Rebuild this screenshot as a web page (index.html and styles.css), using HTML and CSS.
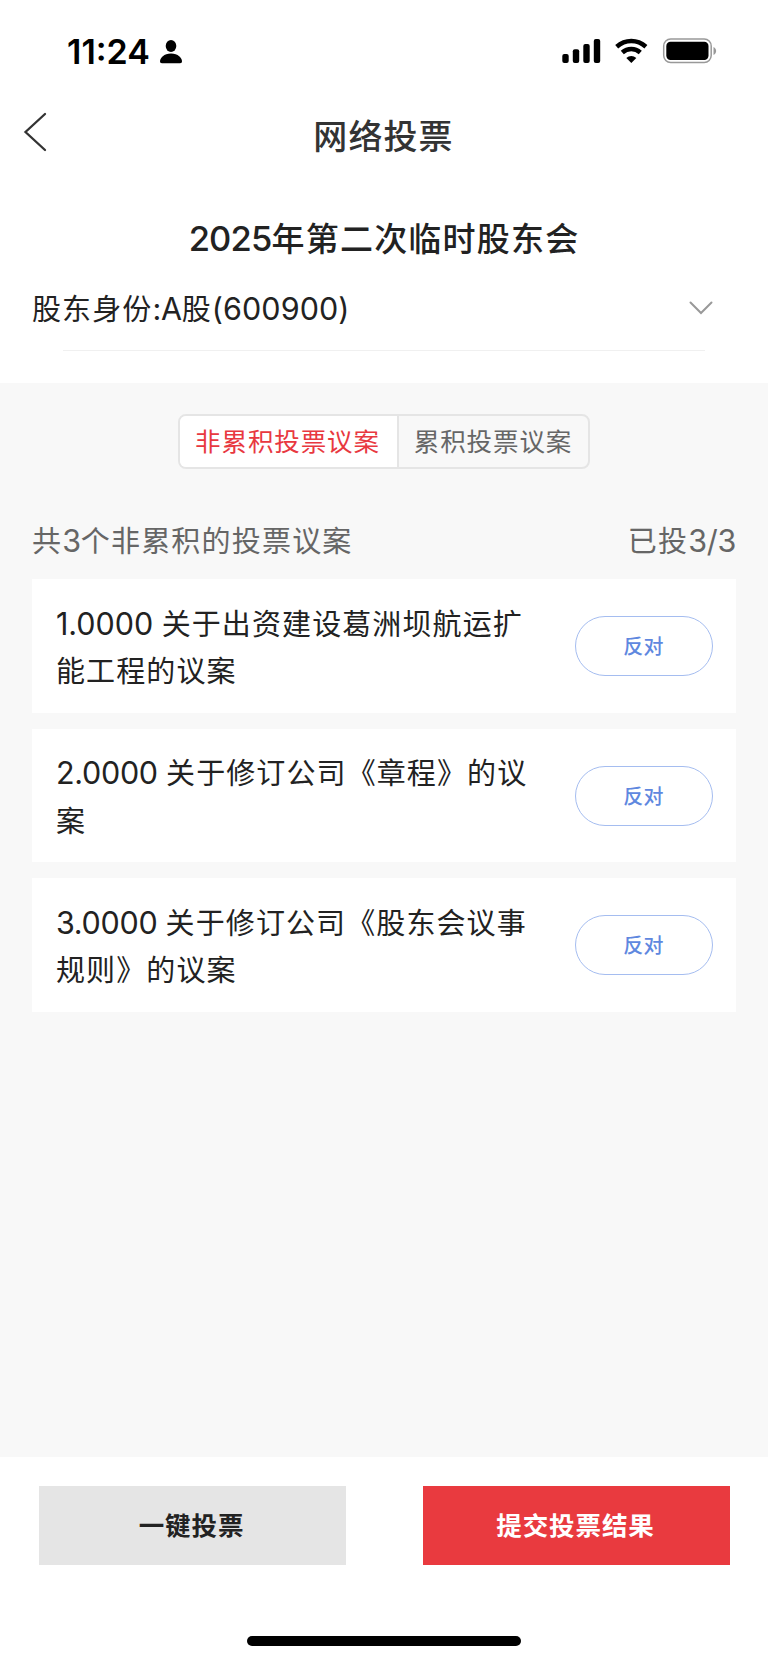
FILE: index.html
```html
<!DOCTYPE html>
<html lang="zh-CN">
<head>
<meta charset="utf-8">
<title>网络投票</title>
<link rel="stylesheet" href="styles.css">
</head>
<body>
<div class="screen">
  <div class="status">
    <span class="time">11:24</span>
    <svg class="person" width="22" height="24" viewBox="0 0 22 24"><ellipse cx="11" cy="6" rx="5.300" ry="6"/><path d="M11 13.500C18 13.500 22 18 22 21.300C22 22.500 21.500 23.300 20 23.300H2C.5 23.300 0 22.500 0 21.300C0 18 4 13.500 11 13.500Z"/></svg>
    <svg class="signals" width="156" height="26" viewBox="0 0 156 26">
      <rect x="0.300" y="16" width="6.400" height="9" rx="2"/><rect x="10.800" y="11.300" width="6.400" height="13.700" rx="2"/><rect x="21.300" y="6" width="6.400" height="19" rx="2"/><rect x="31.800" y="1" width="6.400" height="24" rx="2"/>
      <g fill="none" stroke="#000" stroke-width="4.500"><path d="M54.700 8.800C63.300 1.200 75.300 1.200 83.900 8.800"/><path d="M60.300 14.500C65.500 9.700 73.100 9.700 78.300 14.500"/></g>
      <path d="M64.300 20C67.300 17.300 71.300 17.300 74.300 20L69.300 25Z"/>
      <rect x="101.700" y="1" width="47.500" height="23.600" rx="7" fill="none" stroke="#999" stroke-width="1.500"/>
      <rect x="104.300" y="3.700" width="42.200" height="18.300" rx="4.200"/><path d="M151.500 9V17C155 15.500 155 10.500 151.500 9Z" fill="#999"/>
    </svg>
  </div>
  <header class="nav">
    <svg class="back" width="24" height="40" viewBox="0 0 24 40"><path d="M22 2L2.500 20L22 38"/></svg>
    <h1 class="nav-title">网络投票</h1>
  </header>
  <section class="meeting">
    <h2 class="meeting-title"><span class="year">2025</span>年第二次临时股东会</h2>
    <div class="identity"><span>股东身份<span class="num">:A</span>股<span class="num code">(600900)</span></span>
      <svg class="chevron" width="24" height="14" viewBox="0 0 24 14"><path d="M1.500 1.500L12 12L22.500 1.500"/></svg>
    </div>
    <div class="rule"></div>
  </section>
  <main class="content">
    <div class="tabs"><div class="tab tab-active">非累积投票议案</div><div class="tab tab-other">累积投票议案</div></div>
    <div class="summary"><span>共<span class="num">3</span>个非累积的投票议案</span><span class="count">已投<span class="num">3/3</span></span></div>
    <div class="list">
      <article class="card"><p class="proposal"><span class="num first">1.0000 </span>关于出资建设葛洲坝航运扩<br>能工程的议案</p><div class="vote">反对</div></article>
      <article class="card"><p class="proposal"><span class="num">2.0000 </span>关于修订公司《章程》的议<br>案</p><div class="vote">反对</div></article>
      <article class="card"><p class="proposal"><span class="num">3.0000 </span>关于修订公司《股东会议事<br>规则》的议案</p><div class="vote">反对</div></article>
    </div>
  </main>
  <footer class="footer">
    <div class="actions"><div class="action action-quick">一键投票</div><div class="action action-submit">提交投票结果</div></div>
    <div class="home"></div>
  </footer>
</div>
</body>
</html>
```

FILE: styles.css
```css
* { box-sizing: border-box; }
body { margin: 0; background: #fff; color: #222; font-family: Inter, "Noto Sans CJK SC", sans-serif; }
h1, h2, p { margin: 0; font-weight: 500; }
.num { font-size: 30.5px; letter-spacing: -0.3px; line-height: 1; }
.code { letter-spacing: 0.1px; }
.first { letter-spacing: -0.05px; }
.year { font-size: 34.5px; letter-spacing: -0.8px; line-height: 1; }
.screen { width: 768px; height: 1663px; display: flex; flex-direction: column; overflow: hidden; }
.status { height: 102px; flex: none; display: flex; padding: 0 50.500px 0 67px; }
.time { width: 92.500px; padding-top: 30.500px; font-size: 34px; line-height: 42px; font-weight: 600; color: #000; white-space: nowrap; }
.person { margin-top: 40px; }
.signals { margin: 38px 0 0 auto; }
.nav { height: 84px; flex: none; display: flex; align-items: flex-start; padding: 10px 24px 0 23px; }
.back { flex: none; }
.back path, .chevron path { fill: none; stroke: #333; stroke-width: 2.3; stroke-linecap: round; }
.nav-title { flex: 1; margin-right: 24px; padding-top: 1px; text-align: center; font-size: 34px; line-height: 48px; letter-spacing: 1.1px; color: #333; white-space: nowrap; }
.meeting { height: 197px; flex: none; padding: 28px 32px 0; }
.meeting-title { height: 48px; text-align: center; font-size: 33px; line-height: 51px; letter-spacing: 1.2px; white-space: nowrap; }
.identity { height: 88px; display: flex; justify-content: space-between; align-items: center; padding-top: 1px; padding-right: 23px; font-size: 29px; letter-spacing: 1.1px; }
.chevron { margin-top: 2px; }
.chevron path { stroke: #999; stroke-width: 2; }
.rule { height: 1px; margin: 0 31px; background: #f0f0f0; }
.content { height: 1074px; flex: none; background: #f8f8f8; padding: 31px 32px 0; }
.tabs { width: 412px; height: 55px; margin: 0 auto; display: flex; border: 2px solid #e5e5e5; border-radius: 8px; overflow: hidden; font-size: 25.5px; line-height: 52px; letter-spacing: 0.9px; text-align: center; color: #666; white-space: nowrap; }
.tab-active { width: 219px; padding-right: 2px; background: #fff; border-right: 2px solid #e5e5e5; color: #e8383f; }
.tab-other { flex: 1; padding-right: 1px; }
.summary { height: 110px; display: flex; justify-content: space-between; padding-top: 48px; font-size: 29px; line-height: 50px; letter-spacing: 1.2px; color: #666; white-space: nowrap; }
.list { display: flex; flex-direction: column; gap: 16px; }
.card { height: 133.600px; display: flex; justify-content: space-between; background: #fff; padding: 0 23px 0 24px; }
.proposal { padding-top: 21.500px; font-size: 29px; line-height: 47.500px; font-weight: 400; letter-spacing: 1.1px; white-space: nowrap; }
.vote { width: 138px; height: 60px; margin-top: 37px; padding-right: 1px; border: 1px solid #a5bdf0; border-radius: 30px; text-align: center; font-size: 20px; line-height: 60px; letter-spacing: 0.3px; font-weight: 500; color: #5f88df; }
.footer { flex: 1; padding: 29.400px 38.500px 0; }
.actions { display: flex; justify-content: space-between; }
.action { width: 307px; height: 79px; padding-right: 1px; text-align: center; font-size: 25.500px; line-height: 80px; letter-spacing: 0.900px; font-weight: 600; }
.action-quick { background: #e5e5e5; }
.action-submit { background: #e93a3f; color: #fff; }
.home { width: 274px; height: 10px; margin: 70.600px auto 0; border-radius: 5px; background: #000; }
```
